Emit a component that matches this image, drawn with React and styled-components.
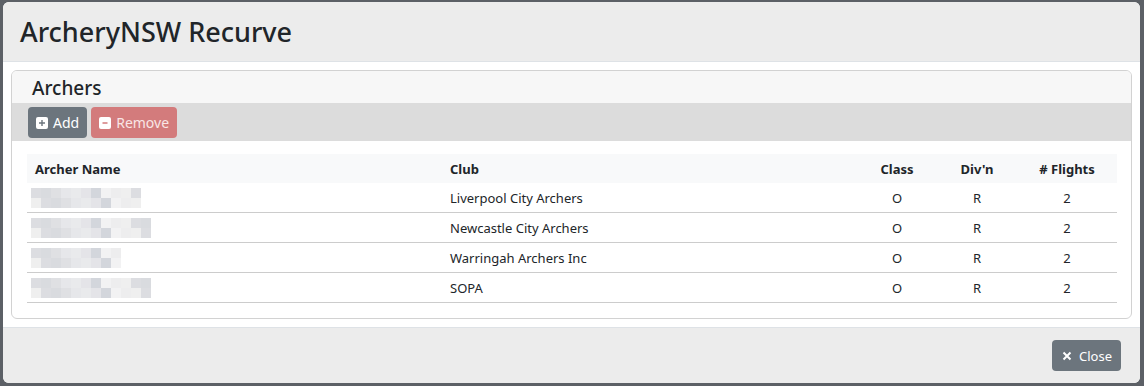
import styled, { createGlobalStyle } from "styled-components"

const GlobalStyle = createGlobalStyle`
    body {
        margin: 0;
        background: #5c6066;
        font-family: "Noto Sans", "Open Sans", sans-serif;
        color: #212529;
    }
`

const archers = [
    { club: "Liverpool City Archers", blur: [11, 11], seed: 1 },
    { club: "Newcastle City Archers", blur: [12, 12], seed: 7 },
    { club: "Warringah Archers Inc", blur: [9, 9], seed: 3 },
    { club: "SOPA", blur: [12, 12], seed: 5 },
]

const shades = ["#e4e4e8", "#ededee", "#d9dbdf", "#e9eaec", "#f2f2f3", "#dcdde1", "#e6e7ea", "#d3d6dc", "#efefef", "#dfe0e3"]

function Pixelated ({ blur, seed }) {
    return (
        <Blocks>
            {blur.map((count, r) => (
                <BlockRow key={r}>
                    {Array.from({ length: count }).map((_, i) => (
                        <Block key={i} shade={shades[(i * 7 + r * 3 + seed * 5) % shades.length]} />
                    ))}
                </BlockRow>
            ))}
        </Blocks>
    )
}

export default function App () {
    return (
        <>
            <GlobalStyle />
            <Modal>
                <Header>
                    <Title>ArcheryNSW Recurve</Title>
                </Header>
                <Body>
                    <Card>
                        <CardHeader>Archers</CardHeader>
                        <Toolbar>
                            <Button variant="secondary">
                                <IconBox color="#6c757d">
                                    <svg width="8" height="8" viewBox="0 0 8 8"><path d="M4 1v6M1 4h6" stroke="currentColor" strokeWidth="1.4" /></svg>
                                </IconBox>
                                Add
                            </Button>
                            <Button variant="danger">
                                <IconBox color="#d37b7c">
                                    <svg width="8" height="8" viewBox="0 0 8 8"><path d="M1.5 4h5" stroke="currentColor" strokeWidth="1.6" /></svg>
                                </IconBox>
                                Remove
                            </Button>
                        </Toolbar>
                        <CardBody>
                            <Table>
                                <HeadRow>
                                    <Cell>Archer Name</Cell>
                                    <Cell>Club</Cell>
                                    <Cell center>Class</Cell>
                                    <Cell center>Div'n</Cell>
                                    <Cell center># Flights</Cell>
                                </HeadRow>
                                {archers.map((a, i) => (
                                    <Row key={i}>
                                        <Cell><Pixelated blur={a.blur} seed={a.seed} /></Cell>
                                        <Cell>{a.club}</Cell>
                                        <Cell center>O</Cell>
                                        <Cell center>R</Cell>
                                        <Cell center>2</Cell>
                                    </Row>
                                ))}
                            </Table>
                        </CardBody>
                    </Card>
                </Body>
                <Footer>
                    <Button variant="secondary" tall>
                        <svg width="10" height="10" viewBox="0 0 10 10"><path d="M1.5 1.5l7 7M8.5 1.5l-7 7" stroke="currentColor" strokeWidth="2" /></svg>
                        Close
                    </Button>
                </Footer>
            </Modal>
        </>
    )
}

const Modal = styled.div`
    box-sizing: border-box;
    width: 1137px;
    height: 381px;
    margin: 2px 0 0 3px;
    background: white;
    border-radius: 6px;
    overflow: hidden;
    display: flex;
    flex-direction: column;
`

const Header = styled.div`
    height: 60px;
    background: #ececec;
    border-bottom: 1px solid #dee2e6;
    display: flex;
    align-items: center;
    padding: 0 17px;
`

const Title = styled.h1`
    margin: 0;
    font-size: 27px;
    font-weight: 500;
    color: #212529;
`

const Body = styled.div`
    padding: 8px;
    flex: 1;
`

const Card = styled.div`
    border: 1px solid #d2d2d2;
    border-radius: 6px;
    overflow: hidden;
`

const CardHeader = styled.div`
    height: 32px;
    background: #f7f7f7;
    padding: 0 20px;
    display: flex;
    align-items: center;
    font-size: 19px;
    font-weight: 500;
    padding-top: 2px;
    box-sizing: border-box;
`

const Toolbar = styled.div`
    background: #dcdcdc;
    height: 38px;
    padding: 4px 16px;
    box-sizing: border-box;
    display: flex;
    gap: 4px;
`

const Button = styled.button`
    height: 31px;
    border: none;
    border-radius: 4px;
    background: ${props => props.variant === "danger" ? "#d37b7c" : "#6c757d"};
    color: ${props => props.variant === "danger" ? "#f9e6e6" : "white"};
    font-family: "Noto Sans", sans-serif;
    font-size: ${props => props.tall ? "13px" : "14px"};
    display: flex;
    align-items: center;
    gap: ${props => props.tall ? "7px" : "5px"};
    padding: ${props => props.tall ? "0 9px 0 10px" : "0 8px"};
`

const IconBox = styled.span`
    width: 12px;
    height: 12px;
    border-radius: 2px;
    background: white;
    color: ${props => props.color};
    display: flex;
    align-items: center;
    justify-content: center;
`

const CardBody = styled.div`
    padding: 13px 15px 15px;
`

const Table = styled.div`
    display: grid;
    grid-template-columns: 415px 415px 80px 80px 100px;
    font-size: 13px;
`

const HeadRow = styled.div`
    display: contents;
    & > div {
        background: #f8f9fa;
        font-weight: 700;
        height: 29px;
    }
`

const Row = styled.div`
    display: contents;
    & > div {
        height: 29px;
        border-bottom: 1px solid #cccccc;
    }
`

const Cell = styled.div`
    display: flex;
    align-items: center;
    justify-content: ${props => props.center ? "center" : "flex-start"};
    padding: 0 8px;
`

const Blocks = styled.div`
    display: flex;
    flex-direction: column;
    margin-left: -4px;
`

const BlockRow = styled.div`
    display: flex;
`

const Block = styled.span`
    width: 10px;
    height: 10px;
    background: ${props => props.shade};
`

const Footer = styled.div`
    height: 56px;
    background: #ececec;
    border-top: 1px solid #dee2e6;
    box-sizing: border-box;
    display: flex;
    align-items: center;
    justify-content: flex-end;
    padding: 0 19px;
`
